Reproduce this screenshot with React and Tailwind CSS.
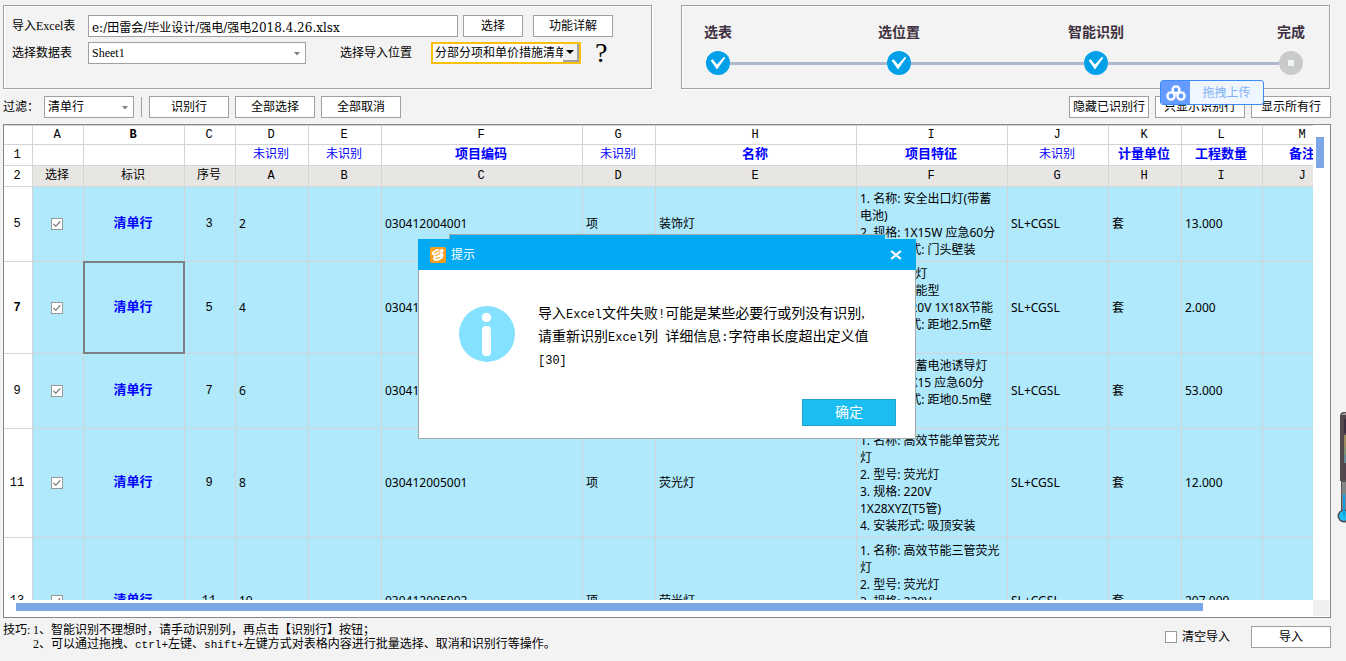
import { useState } from 'react';

// Plain push button used in the toolbars
function PushButton({ className = 'w-20', children }) {
  return (
    <button
      type="button"
      className={`${className} h-[22px] shrink-0 border border-[#a0a0a0] bg-white whitespace-nowrap text-center`}>
      {children}
    </button>
  );
}

// Flat drop-down with a small grey arrow
function FlatSelect({ id, className, children }) {
  return (
    <div className={`relative h-[22px] shrink-0 border border-[#a0a0a0] bg-white ${className}`}>
      <select id={id}
              className="block h-full w-full appearance-none bg-transparent pl-[3px] pr-4 outline-none">
        {children}
      </select>
      <svg className="pointer-events-none absolute right-[5px] top-[9px]" width="6" height="4" viewBox="0 0 6 4">
        <path d="M0 0h6L3 3.6z" fill="#808080" />
      </svg>
    </div>
  );
}

function StepDone() {
  return (
    <svg width="24" height="24" viewBox="0 0 24 24">
      <circle cx="12" cy="12" r="12" fill="#00a0e9" />
      <path d="M4.600 9.400l2-1.200 4.400 5.200L18 5.700l1.300 1.100L11 18.600z" fill="#fff" />
    </svg>
  );
}

function StepPending() {
  return (
    <svg width="24" height="24" viewBox="0 0 24 24">
      <circle cx="12" cy="12" r="12" fill="#c9cacb" />
      <rect x="9" y="9" width="6" height="6" fill="#eef3f3" />
    </svg>
  );
}

function Step({ label, done }) {
  return (
    <li className="flex w-6 shrink-0 flex-col items-center gap-2">
      <span className="whitespace-nowrap text-sm leading-5 font-bold text-[#3e3040]">{label}</span>
      {done ? <StepDone /> : <StepPending />}
    </li>
  );
}

const columns = [
  { letter: 'A', width: 51, mark: '', head: '选择' },
  { letter: 'B', width: 101, mark: '', head: '标识', active: true },
  { letter: 'C', width: 51, mark: '', head: '序号' },
  { letter: 'D', width: 73, mark: '未识别', head: 'A' },
  { letter: 'E', width: 73, mark: '未识别', head: 'B' },
  { letter: 'F', width: 201, mark: '项目编码', head: 'C', known: true },
  { letter: 'G', width: 73, mark: '未识别', head: 'D' },
  { letter: 'H', width: 201, mark: '名称', head: 'E', known: true },
  { letter: 'I', width: 151, mark: '项目特征', head: 'F', known: true },
  { letter: 'J', width: 101, mark: '未识别', head: 'G' },
  { letter: 'K', width: 73, mark: '计量单位', head: 'H', known: true },
  { letter: 'L', width: 81, mark: '工程数量', head: 'I', known: true },
  { letter: 'M', width: 81, mark: '备注', head: 'J', known: true },
];

const rows = [
  {
    no: 5, height: 'h-[75px]', seq: 3, a: 2, code: '030412004001', name: '装饰灯', qty: '13.000',
    features: ['1. 名称: 安全出口灯(带蓄', '电池)', '2. 规格: 1X15W 应急60分', '3. 安装形式: 门头壁装'],
  },
  {
    no: 7, height: 'h-[92px]', seq: 5, a: 4, code: '030412004002', name: '装饰灯', qty: '2.000', active: true,
    features: ['1. 名称: 壁灯', '2. 型号: 节能型', '3. 规格: 220V 1X18X节能', '4. 安装形式: 距地2.5m壁', '装'],
  },
  {
    no: 9, height: 'h-[75px]', seq: 7, a: 6, code: '030412004003', name: '装饰灯', qty: '53.000',
    features: ['1. 名称: 带蓄电池诱导灯', '2. 规格: 1X15 应急60分', '3. 安装形式: 距地0.5m壁', '装'],
  },
  {
    no: 11, height: 'h-[109px]', seq: 9, a: 8, code: '030412005001', name: '荧光灯', qty: '12.000',
    features: ['1. 名称: 高效节能单管荧光', '灯', '2. 型号: 荧光灯', '3. 规格: 220V', '1X28XYZ(T5管)', '4. 安装形式: 吸顶安装'],
  },
  {
    no: 13, height: 'h-[127px]', seq: 11, a: 10, code: '030412005002', name: '荧光灯', qty: '207.000',
    features: ['1. 名称: 高效节能三管荧光', '灯', '2. 型号: 荧光灯', '3. 规格: 220V', '3X28XYZ(T5管)', '4. 安装形式: 吸顶安', '装'],
  },
];

const line = 'border-r border-b border-[#d4d4d4]';
const centerCell = `${line} py-0 pr-0.5 pl-0 text-center whitespace-nowrap font-['Liberation_Mono','Noto_Sans_CJK_SC',monospace]`;
const textCell = `${line} py-0 pr-0 pl-[3px] text-left whitespace-nowrap font-['Noto_Sans','Noto_Sans_CJK_SC',sans-serif]`;

function SheetRow({ row }) {
  const [checked, setChecked] = useState(true);
  return (
    <tr className={`${row.height} bg-[#b0e9fc]`}>
      <th scope="row" className={`${centerCell} bg-white ${row.active ? 'font-bold' : 'font-normal'}`}>{row.no}</th>
      <td className={centerCell}>
        <label className="relative mx-auto block h-3 w-3">
          <input type="checkbox" aria-label={`选择第${row.no}行`} checked={checked}
                 onChange={e => setChecked(e.target.checked)}
                 className="block h-3 w-3 appearance-none border border-[#999] bg-white" />
          {checked && (
            <svg className="pointer-events-none absolute inset-0" width="12" height="12" viewBox="0 0 12 12">
              <path d="M2.5 5.8l2.3 2.5 4.4-4.9" fill="none" stroke="#666" strokeWidth="1.1" />
            </svg>
          )}
        </label>
      </td>
      <td className={`${centerCell} relative text-[13px] font-bold text-[#0000ff]`}>
        清单行
        {row.active && (
          <span className="pointer-events-none absolute -top-px -right-px -bottom-px -left-px border-2 border-[#7d8083]" />
        )}
      </td>
      <td className={centerCell}>{row.seq}</td>
      <td className={textCell}>{row.a}</td>
      <td className={textCell} />
      <td className={textCell}>{row.code}</td>
      <td className={textCell}>项</td>
      <td className={textCell}>{row.name}</td>
      <td className={`${textCell} leading-[17px]`}>
        {row.features.map(f => <div key={f} className="h-[17px]">{f}</div>)}
      </td>
      <td className={textCell}>SL+CGSL</td>
      <td className={textCell}>套</td>
      <td className={textCell}>{row.qty}</td>
      <td className={textCell} />
    </tr>
  );
}

function Sheet() {
  return (
    <div className="mt-[6px] grid min-h-0 flex-1 grid-cols-[minmax(0,1fr)_17px] grid-rows-[minmax(0,1fr)_17px] border border-[#828790] bg-white">
      <div className="overflow-hidden">
        <table className="w-max table-fixed border-separate border-spacing-0 border-t border-[#d4d4d4] leading-4">
          <colgroup>
            <col className="w-[29px]" />
            {columns.map(c => <col key={c.letter} style={{ width: c.width }} />)}
          </colgroup>
          <thead>
            <tr className="h-[19px]">
              <th className={centerCell} />
              {columns.map(c => (
                <th key={c.letter} scope="col" className={`${centerCell} ${c.active ? 'font-bold' : 'font-normal'}`}>{c.letter}</th>
              ))}
            </tr>
          </thead>
          <tbody>
            <tr className="h-[21px]">
              <th scope="row" className={`${centerCell} font-normal`}>1</th>
              {columns.map(c => (
                <td key={c.letter}
                    className={`${centerCell} text-[#0000ff] ${c.known ? 'text-[13px] font-bold' : ''}`}>
                  {c.mark}
                </td>
              ))}
            </tr>
            <tr className="h-[21px] bg-[#e8e6e3]">
              <th scope="row" className={`${centerCell} bg-white font-normal`}>2</th>
              {columns.map(c => <td key={c.letter} className={centerCell}>{c.head}</td>)}
            </tr>
            {rows.map(r => <SheetRow key={r.no} row={r} />)}
          </tbody>
        </table>
      </div>
      <div className="pt-3 pl-[3px]">
        <div className="h-[31px] w-2 bg-[#7ca6e6]" />
      </div>
      <div className="pt-[3px] pl-3">
        <div className="h-2 w-[91.5%] bg-[#7ca6e6]" />
      </div>
      <div className="mr-px mb-px bg-[#f0f0f0]" />
    </div>
  );
}

// Latin runs inside Chinese text, set in a narrower fixed-width face
function Latin({ className = 'text-xs', children }) {
  return <span className={`${className} font-['Liberation_Mono',monospace]`}>{children}</span>;
}

function MessageDialog({ onClose }) {
  return (
    <div role="dialog" aria-label="提示" className="absolute left-[418px] top-[239px] w-[498px]">
      {/* Lip above the title bar */}
      <div className="absolute -top-[5px] left-[31px] h-[5px] w-[436px] border-t border-l border-[#9fa6aa] bg-[#02a9f3]" />
      <div className="flex h-[31px] items-center bg-[#02a9f3] pr-3 pl-3 text-white">
        <svg width="16" height="16" viewBox="0 0 16 16">
          <rect width="16" height="16" rx="2" fill="#f99d1c" />
          <path d="M1.500 5.500L6.500 2l3 .8L12 1.800l2 1.600-2 2.600 1.800 1.400-1.400 4L7.500 14l-3.800-.6-.7-3 1.500-1.600L2 7.800z" fill="#fff" />
          <path d="M4.200 6.300l4-2.300M5.500 11.500l4.500-1M5.300 8.700l5-2.500M10.300 3.200L9.200 5" stroke="#f99d1c" strokeWidth="1.1" />
        </svg>
        <span className="ml-[5px] flex-1">提示</span>
        <button type="button" aria-label="关闭" onClick={onClose} className="p-0.5">
          <svg width="12" height="10" viewBox="0 0 12 10">
            <path d="M1.2 1l9.6 8M10.8 1L1.2 9" stroke="#fff" strokeWidth="2.2" />
          </svg>
        </button>
      </div>
      <div className="border-x border-b border-[#a5a8aa] bg-white pb-3">
        <div className="flex items-start pt-8 pl-10">
          <svg className="mt-1 shrink-0" width="56" height="56" viewBox="0 0 56 56">
            <circle cx="28" cy="28" r="28" fill="#84e1ff" />
            <circle cx="27.5" cy="11.5" r="4.7" fill="#fff" />
            <rect x="23" y="20" width="9" height="30" rx="4" fill="#fff" />
          </svg>
          <div className="ml-[23px] text-sm text-black">
            <p className="h-[23px] leading-[23px] whitespace-pre">导入<Latin>Excel</Latin>文件失败<Latin>!</Latin>可能是某些必要行或列没有识别,</p>
            <p className="h-[23px] leading-[23px] whitespace-pre">请重新识别<Latin>Excel</Latin>列<Latin> </Latin>详细信息<Latin>:</Latin>字符串长度超出定义值</p>
            <p className="h-[23px] leading-[23px] whitespace-pre"><Latin>[30]</Latin></p>
          </div>
        </div>
        <div className="mt-7 flex justify-end pr-[19px]">
          <button type="button" onClick={onClose}
                  className="h-[27px] w-[94px] border border-[#22a3cf] bg-[#1abef0] text-sm leading-6 text-white">
            确定
          </button>
        </div>
      </div>
    </div>
  );
}

// Floating cloud-disk drop target
function UploadBadge() {
  return (
    <button type="button"
            className="absolute top-20 right-[82px] flex h-[25px] w-[104px] items-stretch overflow-hidden rounded-[3px] border border-[#3c8cf5] bg-[#eff6ff]">
      <span className="flex w-[29px] items-center justify-center bg-[#659bff]">
        <svg width="20" height="16" viewBox="0 0 20 16" fill="none" stroke="#fff" strokeWidth="2.4">
          <circle cx="10" cy="4.8" r="3.4" />
          <circle cx="5" cy="11" r="3.6" />
          <circle cx="15" cy="11" r="3.6" />
        </svg>
      </span>
      <span className="flex-1 text-center leading-6 text-[#7fb2f5]">拖拽上传</span>
    </button>
  );
}

// Desktop thermometer gadget peeking in from the right edge
function EdgeGadget() {
  return (
    <svg className="absolute top-[411px] right-0" width="9" height="112" viewBox="0 0 9 112">
      <path d="M3 5q0-3 3-4h3v69H3z" fill="#54464f" />
      <path d="M4 4l3-2h2v2z" fill="#a0a0a0" />
      <path d="M7 9h2M7 11h2M7 13h2M7 15h2M7 17h2M7 19h2M7 21h2" stroke="#1f1830" />
      <path d="M7 25h2M7 27h2M7 29h2M7 31h2M7 33h2M7 35h2" stroke="#e3cf6a" />
      <path d="M7 37h2M7 39h2M7 41h2M7 43h2" stroke="#a8d890" />
      <path d="M7 45h2M7 47h2M7 49h2M7 51h2" stroke="#74cde0" />
      <path d="M4 69h5v34H4z" fill="#555" />
      <path d="M5 71h4v31H5z" fill="#858585" />
      <circle cx="7" cy="105" r="6.5" fill="#4c4c4c" />
      <circle cx="7" cy="105" r="5" fill="#1abef0" />
      <path d="M6 83h2v22H6z" fill="#0b9fe6" />
    </svg>
  );
}

export default function App() {
  const [showDialog, setShowDialog] = useState(true);
  const [path, setPath] = useState('e:/田雷会/毕业设计/强电/强电2018.4.26.xlsx');

  return (
    <div className="relative flex h-screen flex-col overflow-hidden bg-[#f3f3f3] pt-[5px] pr-[15px] pl-[3px] text-xs text-black font-['Liberation_Serif','Noto_Sans_CJK_SC',serif]">
      {/* Source file + progress */}
      <div className="grid grid-cols-2 gap-[29px] pr-px">
        <section className="flex h-[84px] flex-col gap-[5px] border border-[#a0a0a0] pt-[9px] pl-2 shadow-[1px_1px_0_#fff,inset_1px_1px_0_#fff]">
          <div className="flex items-center">
            <label htmlFor="file" className="w-[76px] shrink-0 whitespace-nowrap">导入Excel表</label>
            <input id="file" type="text" value={path} onChange={e => setPath(e.target.value)}
                   className="h-[22px] w-[370px] border border-[#a0a0a0] bg-white px-[3px] outline-none font-['DejaVu_Serif','Noto_Sans_CJK_SC',serif]" />
            <div className="ml-[5px] flex gap-[10px]">
              <PushButton className="w-[60px]">选择</PushButton>
              <PushButton>功能详解</PushButton>
            </div>
          </div>
          <div className="flex items-center">
            <label htmlFor="sheet" className="w-[76px] shrink-0 whitespace-nowrap">选择数据表</label>
            <FlatSelect id="sheet" className="w-[218px]">
              <option>Sheet1</option>
            </FlatSelect>
            <label htmlFor="target" className="ml-[34px] w-[91px] shrink-0 whitespace-nowrap">选择导入位置</label>
            <div className="flex h-[22px] w-[150px] shrink-0 border-2 border-[#fcbf10] bg-white">
              <div className="relative h-full w-full">
                <select id="target" className="block h-full w-full appearance-none pr-4 pl-0.5 outline-none">
                  <option>分部分项和单价措施清单</option>
                </select>
                <span className="pointer-events-none absolute top-0 right-0 flex h-[18px] w-4 items-center justify-center border-r-2 border-b-2 border-[#a0a0a0] bg-[#f0f0f0]">
                  <svg width="8" height="4" viewBox="0 0 8 4"><path d="M0 0h8L4 4z" /></svg>
                </span>
              </div>
            </div>
            <button type="button" aria-label="帮助"
                    className="ml-[14px] h-[22px] text-[28px] leading-[22px] font-['Liberation_Serif',serif]">?</button>
          </div>
        </section>
        <section className="border border-[#a0a0a0] pt-[17px] pr-[26px] pl-6 shadow-[1px_1px_0_#fff,inset_1px_1px_0_#fff]">
          <ol className="flex items-end">
            <Step label="选表" done />
            <li aria-hidden="true" className="mb-[10px] h-[3px] flex-[157] bg-[#adb8cd]" />
            <Step label="选位置" done />
            <li aria-hidden="true" className="mb-[10px] h-[3px] flex-[173] bg-[#adb8cd]" />
            <Step label="智能识别" done />
            <li aria-hidden="true" className="mb-[10px] h-[3px] flex-[171] bg-[#adb8cd]" />
            <Step label="完成" />
          </ol>
        </section>
      </div>

      {/* Filter toolbar */}
      <div className="mt-[7px] flex items-center">
        <label htmlFor="filter" className="w-[41px] shrink-0 whitespace-nowrap">过滤：</label>
        <FlatSelect id="filter" className="w-[90px]">
          <option>清单行</option>
        </FlatSelect>
        <div className="ml-[7px] h-5 border-l border-[#a0a0a0]" />
        <div className="ml-[7px] flex flex-1 gap-[6px]">
          <PushButton>识别行</PushButton>
          <PushButton>全部选择</PushButton>
          <PushButton>全部取消</PushButton>
        </div>
        <div className="flex gap-[6px]">
          <PushButton>隐藏已识别行</PushButton>
          <PushButton className="w-[90px]">只显示识别行</PushButton>
          <PushButton>显示所有行</PushButton>
        </div>
      </div>

      <Sheet />

      {/* Tips and import */}
      <footer className="flex h-[43px] shrink-0 items-start pt-[5px] leading-[14px]">
        <div className="flex flex-1 whitespace-nowrap">
          <span className="w-[30px]">技巧:</span>
          <div>
            <p className="h-[14px]">1、智能识别不理想时，请手动识别列，再点击【识别行】按钮；</p>
            <p className="h-[14px]">
              2、可以通过拖拽、<Latin className="text-[11px]">ctrl+</Latin>左键、<Latin className="text-[11px]">shift+</Latin>左键方式对表格内容进行批量选择、取消和识别行等操作。
            </p>
          </div>
        </div>
        <div className="flex items-center pt-[3px]">
          <label className="mr-[21px] flex items-center gap-[5px]">
            <input type="checkbox" className="h-3 w-3 appearance-none border border-[#999] bg-white checked:bg-[#7ca6e6]" />
            清空导入
          </label>
          <PushButton>导入</PushButton>
        </div>
      </footer>

      <UploadBadge />
      <EdgeGadget />
      {showDialog && <MessageDialog onClose={() => setShowDialog(false)} />}
    </div>
  );
}
